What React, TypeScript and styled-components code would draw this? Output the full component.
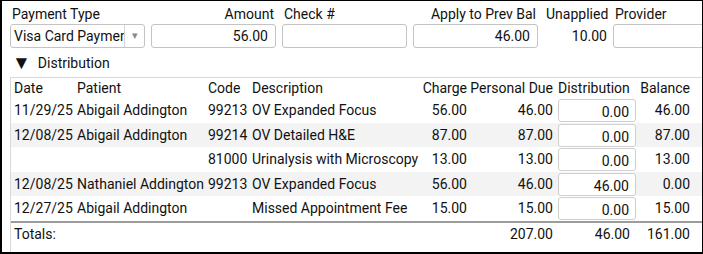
import styled, { createGlobalStyle } from "styled-components";

const GlobalStyle = createGlobalStyle`
  body {
    margin: 0;
    background: #fff;
    font-family: Roboto, "Liberation Sans", sans-serif;
    color: #111;
  }
`;

interface Line {
  date: string;
  patient: string;
  code: string;
  description: string;
  charge: string;
  due: string;
  distribution: string;
  balance: string;
}

const lines: Line[] = [
  { date: "11/29/25", patient: "Abigail Addington", code: "99213", description: "OV Expanded Focus", charge: "56.00", due: "46.00", distribution: "0.00", balance: "46.00" },
  { date: "12/08/25", patient: "Abigail Addington", code: "99214", description: "OV Detailed H&E", charge: "87.00", due: "87.00", distribution: "0.00", balance: "87.00" },
  { date: "", patient: "", code: "81000", description: "Urinalysis with Microscopy", charge: "13.00", due: "13.00", distribution: "0.00", balance: "13.00" },
  { date: "12/08/25", patient: "Nathaniel Addington", code: "99213", description: "OV Expanded Focus", charge: "56.00", due: "46.00", distribution: "46.00", balance: "0.00" },
  { date: "12/27/25", patient: "Abigail Addington", code: "", description: "Missed Appointment Fee", charge: "15.00", due: "15.00", distribution: "0.00", balance: "15.00" },
];

const App = () => {
  return (
    <>
      <GlobalStyle />
      <Frame>
        <FormRow>
          <Field $width={135}>
            <Label>Payment Type</Label>
            <Select>
              <span className="value">Visa Card Payment</span>
              <span className="arrow">▾</span>
            </Select>
          </Field>
          <Field $width={125}>
            <Label $right>Amount</Label>
            <Input $right>56.00</Input>
          </Field>
          <Field $width={125}>
            <Label>Check #</Label>
            <Input />
          </Field>
          <Field $width={125}>
            <Label $right>Apply to Prev Bal</Label>
            <Input $right>46.00</Input>
          </Field>
          <Field $width={63}>
            <Label $right>Unapplied</Label>
            <Plain>10.00</Plain>
          </Field>
          <Field $width={110}>
            <Label>Provider</Label>
            <Input />
          </Field>
        </FormRow>

        <SectionToggle>
          <span className="tri">▼</span>
          <span>Distribution</span>
        </SectionToggle>

        <TableBox>
          <HeadRow>
            <Cell>Date</Cell>
            <Cell>Patient</Cell>
            <Cell>Code</Cell>
            <Cell>Description</Cell>
            <Cell $right>Charge</Cell>
            <Cell $right>Personal Due</Cell>
            <Cell $pad={5}>Distribution</Cell>
            <Cell $right>Balance</Cell>
          </HeadRow>
          {lines.map((l, i) => (
            <Row key={i} $striped={i % 2 === 1}>
              <Cell>{l.date}</Cell>
              <Cell>{l.patient}</Cell>
              <Cell>{l.code}</Cell>
              <Cell>{l.description}</Cell>
              <Cell $right>{l.charge}</Cell>
              <Cell $right>{l.due}</Cell>
              <DistInput>{l.distribution}</DistInput>
              <Cell $right>{l.balance}</Cell>
            </Row>
          ))}
          <TotalsRow>
            <Cell>Totals:</Cell>
            <Cell />
            <Cell />
            <Cell />
            <Cell />
            <Cell $right>207.00</Cell>
            <Cell $right $pad={6}>46.00</Cell>
            <Cell $right>161.00</Cell>
          </TotalsRow>
        </TableBox>
      </Frame>
    </>
  );
};

const Frame = styled.div`
  width: 703px;
  height: 254px;
  box-sizing: border-box;
  border: 1px solid #000;
  border-left-width: 2px;
  border-bottom-width: 2px;
  overflow: hidden;
  padding: 5px 0 0 8px;
  font-size: 14px;
`;

const FormRow = styled.div`
  display: flex;
  gap: 6px;
  white-space: nowrap;
`;

const Field = styled.div<{ $width: number }>`
  flex: 0 0 ${(p) => p.$width}px;
  width: ${(p) => p.$width}px;
  min-width: 0;
  display: flex;
  flex-direction: column;
  gap: 1px;
`;

const Label = styled.div<{ $right?: boolean }>`
  height: 17px;
  line-height: 17px;
  padding: 0 2px;
  text-align: ${(p) => (p.$right ? "right" : "left")};
`;

const Input = styled.div<{ $right?: boolean }>`
  height: 24px;
  box-sizing: border-box;
  border: 1px solid #c4c4c4;
  border-radius: 3px;
  padding: 0 7px;
  line-height: 22px;
  text-align: ${(p) => (p.$right ? "right" : "left")};
  background: #fff;
`;

const Select = styled(Input)`
  display: flex;
  padding: 0;
  overflow: hidden;

  .value {
    flex: 1;
    min-width: 0;
    overflow: hidden;
    padding-left: 3px;
  }

  .arrow {
    flex: 0 0 19px;
    border-left: 1px solid #d6d6d6;
    color: #8a8a8a;
    font-size: 11px;
    text-align: center;
  }
`;

const Plain = styled.div`
  height: 24px;
  line-height: 24px;
  text-align: right;
`;

const SectionToggle = styled.div`
  display: flex;
  align-items: center;
  gap: 7px;
  height: 20px;
  margin-top: 5px;
  padding-left: 2px;

  .tri {
    font-size: 19px;
    line-height: 20px;
  }
`;

const TableBox = styled.div`
  margin-top: 4px;
  border: 1px solid #d9d9d9;
  border-right: none;
  padding-left: 3px;
  height: 200px;
`;

const grid = `
  display: grid;
  grid-template-columns: 63px 131px 44px 165px 50px 86px 83px 54px;
  white-space: nowrap;
`;

const HeadRow = styled.div`
  ${grid};
  height: 20px;
  line-height: 21px;
`;

const Row = styled.div<{ $striped: boolean }>`
  ${grid};
  height: 24.6px;
  line-height: 24px;
  margin-left: -3px;
  padding-left: 3px;
  background: ${(p) => (p.$striped ? "#f3f3f3" : "#fff")};
`;

const TotalsRow = styled.div`
  ${grid};
  height: 22px;
  line-height: 22px;
  margin-left: -3px;
  padding-left: 3px;
  border-top: 2px solid #9c9c9c;
`;

const Cell = styled.div<{ $right?: boolean; $pad?: number }>`
  text-align: ${(p) => (p.$right ? "right" : "left")};
  padding-left: ${(p) => (p.$pad && !p.$right ? p.$pad : 0)}px;
  padding-right: ${(p) => (p.$pad && p.$right ? p.$pad : 0)}px;
`;

const DistInput = styled.div`
  margin: 1px 0 0 5px;
  height: 23px;
  box-sizing: border-box;
  border: 1px solid #cfcfcf;
  border-radius: 3px;
  background: #fff;
  text-align: right;
  padding: 3px 6px 0 0;
  line-height: 18px;
`;

export default App;
